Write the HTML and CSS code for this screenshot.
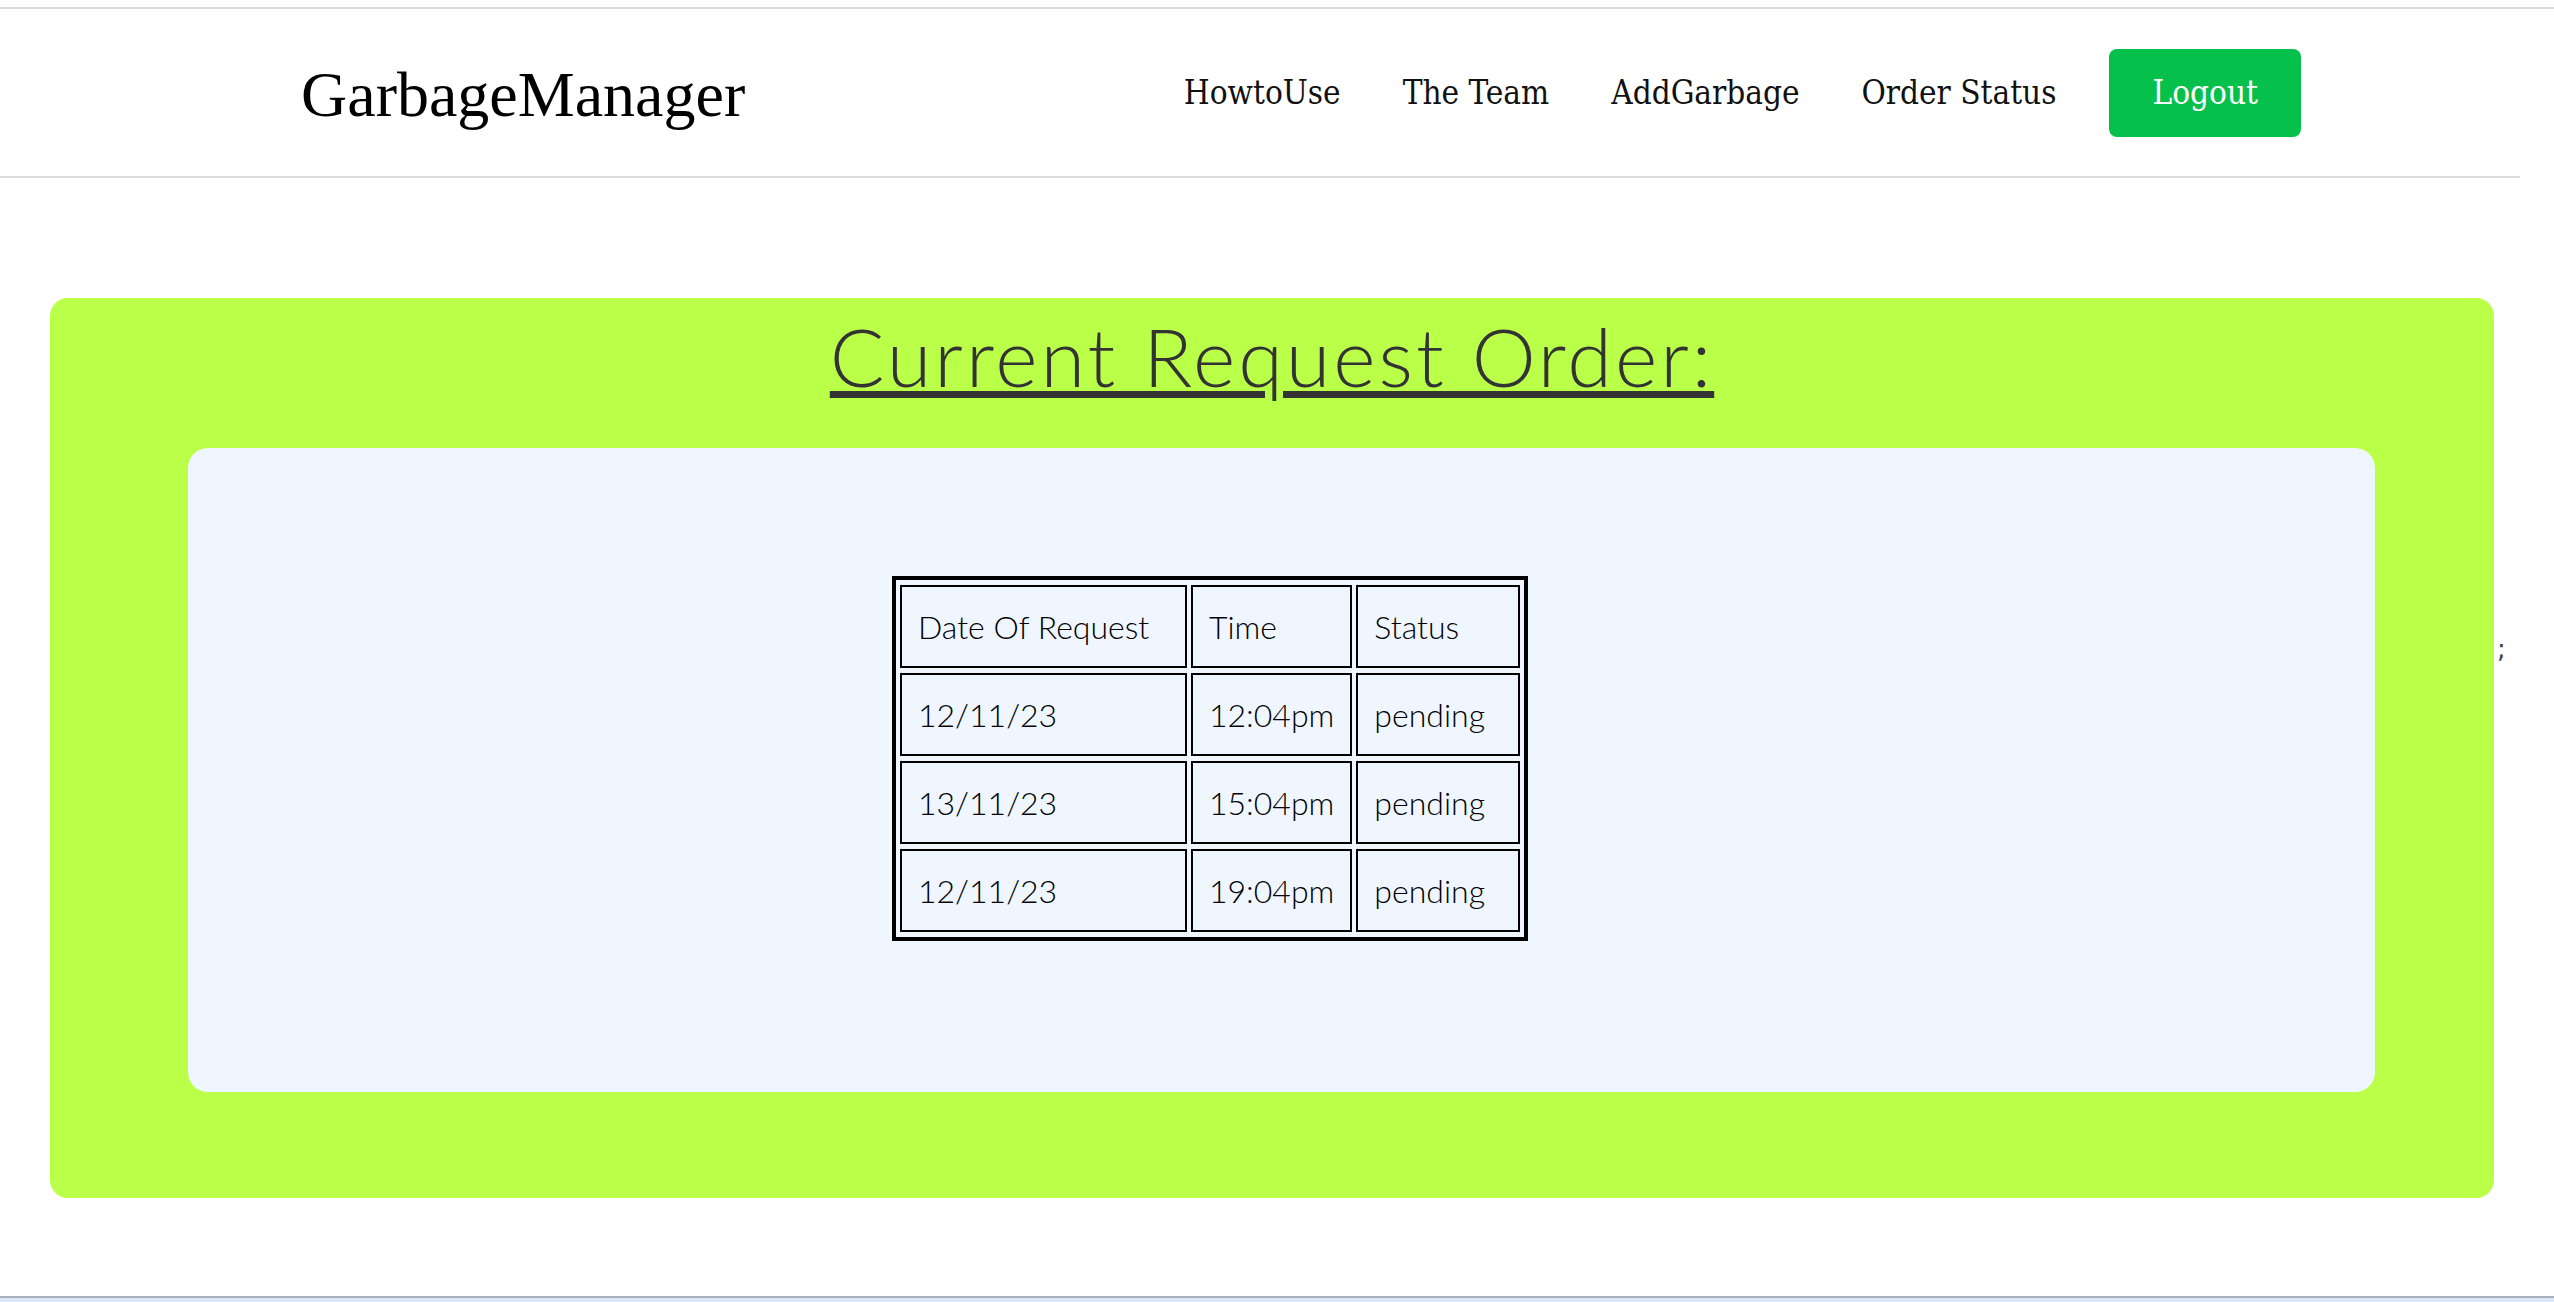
FILE: index.html
```html
<!DOCTYPE html>
<html lang="en">
<head>
<meta charset="utf-8">
<title>GarbageManager</title>
<link rel="stylesheet" href="styles.css">
</head>
<body>
<div class="topline"></div>
<header class="navbar">
  <div class="brand">GarbageManager</div>
  <nav class="nav">
    <ul class="nav-links">
      <li><a href="#">HowtoUse</a></li>
      <li><a href="#">The Team</a></li>
      <li><a href="#">AddGarbage</a></li>
      <li><a href="#">Order Status</a></li>
    </ul>
    <button class="logout">Logout</button>
  </nav>
</header>
<main class="main">
  <section class="panel">
    <h1 class="title">Current Request Order:</h1>
    <div class="card">
      <table class="orders">
        <tr>
          <th class="c1">Date Of Request</th>
          <th class="c2">Time</th>
          <th class="c3">Status</th>
        </tr>
        <tr>
          <td class="c1">12/11/23</td>
          <td class="c2">12:04pm</td>
          <td class="c3">pending</td>
        </tr>
        <tr>
          <td class="c1">13/11/23</td>
          <td class="c2">15:04pm</td>
          <td class="c3">pending</td>
        </tr>
        <tr>
          <td class="c1">12/11/23</td>
          <td class="c2">19:04pm</td>
          <td class="c3">pending</td>
        </tr>
      </table>
    </div>
  </section>
  <span class="stray">;</span>
</main>
<div class="bottombar"></div>
</body>
</html>
```
FILE: styles.css
```css
html, body {
  margin: 0;
  padding: 0;
  background: #ffffff;
}
body {
  width: 2554px;
  height: 1302px;
  overflow: hidden;
  font-family: "Liberation Serif", serif;
}
.topline {
  margin-top: 7px;
  height: 2px;
  background: #dcdcdc;
}
.navbar {
  width: 2520px;
  box-sizing: border-box;
  height: 169px;
  border-bottom: 2px solid #dcdcdc;
  display: flex;
  align-items: center;
  justify-content: space-between;
  padding: 0 219px 0 301px;
}
.brand {
  font-family: "Liberation Serif", "Times New Roman", serif;
  font-size: 64px;
  color: #000;
  line-height: 1;
  margin-top: 4px;
}
.nav {
  display: flex;
  align-items: center;
}
.nav-links {
  display: flex;
  list-style: none;
  margin: 0;
  padding: 0;
  gap: 62px;
}
.nav-links a,
.logout {
  font-family: "DejaVu Serif Condensed", "DejaVu Serif", serif;
  font-stretch: condensed;
  font-size: 33px;
  color: #111;
  text-decoration: none;
  letter-spacing: 0;
}
.logout {
  margin-left: 53px;
  height: 88px;
  padding: 0 43px;
  border: none;
  border-radius: 8px;
  background: #05c14c;
  color: #ffffff;
}
.main {
  display: flex;
  align-items: flex-start;
  margin-top: 120px;
  padding-left: 50px;
}
.panel {
  width: 2444px;
  box-sizing: border-box;
  background: #baff48;
  border-radius: 18px;
  padding: 17px 119px 106px 119px;
}
.title {
  margin: 0;
  text-align: center;
  font-family: "Lato", "Inter", sans-serif;
  font-weight: 300;
  font-size: 81px;
  line-height: 81px;
  letter-spacing: 3px;
  color: #333333;
  text-decoration: underline;
  text-decoration-thickness: 7px;
  text-underline-offset: 4px;
  text-decoration-color: #333333;
}
.card {
  margin: 52px 0 0 19px;
  height: 644px;
  box-sizing: border-box;
  background: #eff6ff;
  border-radius: 20px;
  padding: 128px 0 0 704px;
}
.orders {
  border: 4px solid #000;
  border-collapse: separate;
  border-spacing: 4px 5px;
  font-family: "Lato", "Inter", sans-serif;
  font-weight: 300;
  font-size: 32px;
  letter-spacing: 0;
  color: #000;
}
.orders th,
.orders td {
  border: 2px solid #000;
  padding: 15.5px 16px;
  line-height: 48px;
  font-weight: 300;
  text-align: left;
  white-space: nowrap;
  box-sizing: content-box;
}
.c1 { width: 251px; }
.c2 { width: 119px; }
.c3 { width: 128px; }
.stray {
  margin-top: 338px;
  margin-left: 3px;
  font-family: "DejaVu Sans", sans-serif;
  font-size: 26px;
  color: #444;
  line-height: 1;
}
.bottombar {
  position: absolute;
  left: 0;
  top: 1296px;
  width: 2554px;
  height: 6px;
  box-sizing: border-box;
  border-top: 2px solid #aab1bd;
  background: #dde6f6;
}
```
